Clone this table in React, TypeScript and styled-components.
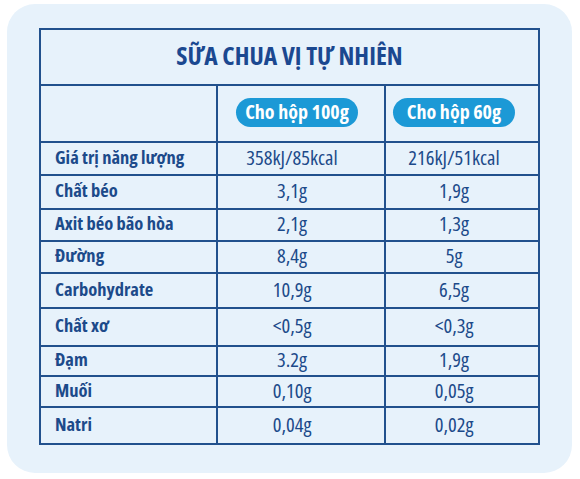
import React from "react";
import styled, { createGlobalStyle } from "styled-components";

const Global = createGlobalStyle`
  html, body { margin: 0; padding: 0; background: #ffffff; }
  body { font-family: "Open Sans", "Liberation Sans", sans-serif; }
`;

const Page = styled.div`
  width: 580px;
  height: 479px;
  padding: 4px 8px 6px 7px;
  box-sizing: border-box;
`;

const Card = styled.div`
  width: 565px;
  height: 469px;
  background: #e7f2fb;
  border-radius: 28px;
  padding: 24px 0 0 32px;
  box-sizing: border-box;
`;

const Table = styled.table`
  border-collapse: collapse;
  table-layout: fixed;
  width: 499px;
  color: #1c4a8a;
  td, th {
    border: 2px solid #22518d;
    padding: 0;
    line-height: 22px;
    box-sizing: border-box;
  }
`;

const TitleRow = styled.tr`
  height: 56px;
`;

const TitleCell = styled.th`
  font-size: 25.5px;
  font-weight: 700;
  font-stretch: 75%;
  color: #1b4890;
  text-align: center;
  vertical-align: middle;
  padding-bottom: 5px !important;
`;

const HeadRow = styled.tr`
  height: 57px;
`;

const HeadCell = styled.td`
  text-align: center;
  vertical-align: middle;
  padding-bottom: 2px !important;
`;

const Pill = styled.span<{ $shift?: number }>`
  display: inline-flex;
  align-items: center;
  justify-content: center;
  width: 122px;
  height: 29px;
  border-radius: 15px;
  background: #1c99d6;
  color: #ffffff;
  font-weight: 700;
  font-size: 20px;
  font-stretch: 75%;
  line-height: 1;
  padding-bottom: 1px;
  box-sizing: border-box;
  vertical-align: middle;
  margin-left: ${(p) => p.$shift ?? 0}px;
`;

const Row = styled.tr<{ $h: number }>`
  height: ${(p) => p.$h}px;
`;

const Label = styled.td`
  font-weight: 700;
  font-size: 18.5px;
  font-stretch: 75%;
  padding-left: 14px !important;
  padding-bottom: 4px !important;
  vertical-align: middle;
`;

const Value = styled.td<{ $shift: number }>`
  font-size: 20.5px;
  font-stretch: 75%;
  text-align: center;
  vertical-align: middle;
  padding-bottom: 4px !important;
  padding-right: ${(p) => p.$shift}px !important;
`;

const rows: { label: string; a: string; b: string; h: number }[] = [
  { label: "Giá trị năng lượng", a: "358kJ/85kcal", b: "216kJ/51kcal", h: 33 },
  { label: "Chất béo", a: "3,1g", b: "1,9g", h: 34 },
  { label: "Axit béo bão hòa", a: "2,1g", b: "1,3g", h: 32 },
  { label: "Đường", a: "8,4g", b: "5g", h: 32 },
  { label: "Carbohydrate", a: "10,9g", b: "6,5g", h: 35 },
  { label: "Chất xơ", a: "<0,5g", b: "<0,3g", h: 38 },
  { label: "Đạm", a: "3.2g", b: "1,9g", h: 30 },
  { label: "Muối", a: "0,10g", b: "0,05g", h: 31 },
  { label: "Natri", a: "0,04g", b: "0,02g", h: 37 },
];

export default function App() {
  return (
    <>
      <Global />
      <Page>
        <Card>
          <Table>
            <colgroup>
              <col style={{ width: 177 }} />
              <col style={{ width: 168 }} />
              <col style={{ width: 154 }} />
            </colgroup>
            <thead>
              <TitleRow>
                <TitleCell colSpan={3}>SỮA CHUA VỊ TỰ NHIÊN</TitleCell>
              </TitleRow>
            </thead>
            <tbody>
              <HeadRow>
                <HeadCell />
                <HeadCell>
                  <Pill $shift={-8}>Cho hộp 100g</Pill>
                </HeadCell>
                <HeadCell>
                  <Pill $shift={-16}>Cho hộp 60g</Pill>
                </HeadCell>
              </HeadRow>
              {rows.map((r) => (
                <Row key={r.label} $h={r.h}>
                  <Label>{r.label}</Label>
                  <Value $shift={18}>{r.a}</Value>
                  <Value $shift={16}>{r.b}</Value>
                </Row>
              ))}
            </tbody>
          </Table>
        </Card>
      </Page>
    </>
  );
}
